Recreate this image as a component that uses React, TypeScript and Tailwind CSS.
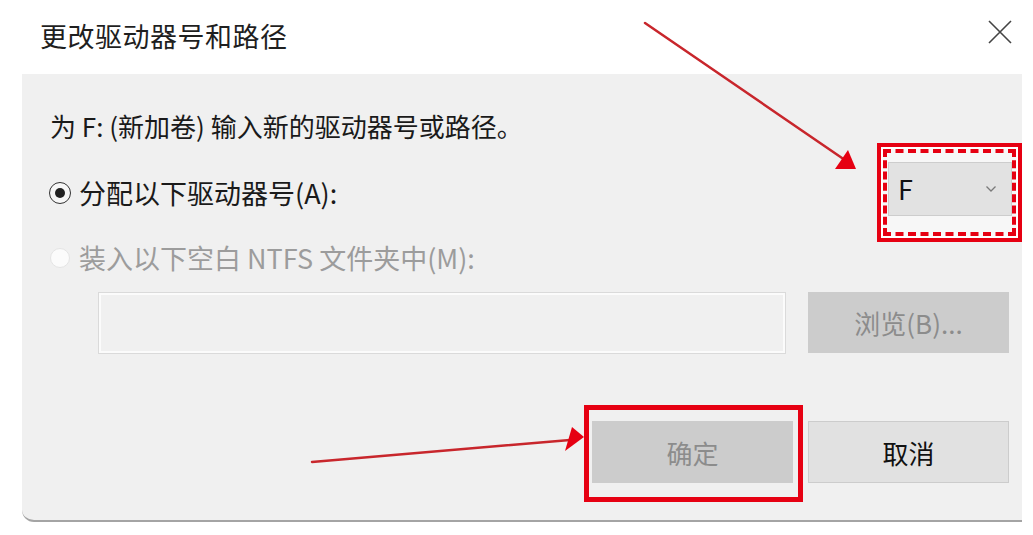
import React from "react";

const font = { fontFamily: '"Noto Sans CJK SC", "Noto Sans", sans-serif' };

// Small chevron used inside the drive letter combo box
const Chevron = () => (
  <svg width="12" height="8" viewBox="0 0 12 8" fill="none">
    <path d="M1.5 1.5 L6 6 L10.5 1.5" stroke="#7a7a7a" strokeWidth="1.3" />
  </svg>
);

// Red annotation arrows drawn over the dialog
const Arrows = () => (
  <svg
    className="absolute inset-0 pointer-events-none"
    width="1033"
    height="535"
    viewBox="0 0 1033 535"
  >
    <line x1="645" y1="23" x2="842" y2="158" stroke="#c8262c" strokeWidth="2.5" strokeLinecap="round" />
    <polygon points="835,169 856,169 848,150" fill="#e60012" />
    <line x1="312" y1="462" x2="570" y2="440" stroke="#c8262c" strokeWidth="2.5" strokeLinecap="round" />
    <polygon points="565,451 584,437 572,427" fill="#e60012" />
  </svg>
);

const App: React.FC = () => {
  return (
    <div className="relative w-[1033px] h-[535px] bg-white overflow-hidden" style={font}>
      {/* Title bar */}
      <div className="h-[74px] flex items-center justify-between pl-[40px] pr-[20px]">
        <span className="text-[27px] leading-[30px] text-[#1f1f1f] -mt-[2px] tracking-[0.5px]">更改驱动器号和路径</span>
        <svg width="26" height="26" viewBox="0 0 26 26" className="-mt-[10px]">
          <path d="M2 2 L24 24 M24 2 L2 24" stroke="#444" strokeWidth="1.6" />
        </svg>
      </div>

      {/* Dialog body */}
      <div className="ml-[22px] w-[1000px] h-[448px] bg-[#f0f0f0] rounded-bl-[12px] border-b-2 border-[#a4a4a4] pt-[37px]">
        <div className="pl-[28px] h-[30px] text-[26px] leading-[30px] text-[#1a1a1a]">
          为 F: (新加卷) 输入新的驱动器号或路径。
        </div>

        {/* Assign drive letter */}
        <div className="mt-[2px] h-[99px] flex items-center justify-between">
          <label className="flex items-center pl-[27px]">
            <span className="w-[22px] h-[22px] rounded-full border-[1.5px] border-[#333] flex items-center justify-center bg-[#f7f7f7]">
              <span className="w-[10px] h-[10px] rounded-full bg-[#222]" />
            </span>
            <span className="ml-[8px] text-[27px] leading-[30px] text-[#1a1a1a]">分配以下驱动器号(A):</span>
          </label>
          <div className="w-[145px] h-[99px] border-[4px] border-[#e60012] bg-white p-[2px]">
            <div className="w-full h-full border-[4px] border-dashed border-[#e60012] bg-[#f7f7f7] pt-[9px] pl-[1px]">
              <div className="w-[124px] h-[54px] bg-[#e2e2e2] border border-[#cdcdcd] flex items-center justify-between pl-[9px] pr-[14px]">
                <span className="text-[27px] leading-[30px] text-[#111]">F</span>
                <Chevron />
              </div>
            </div>
          </div>
        </div>

        {/* Mount in empty NTFS folder (disabled) */}
        <label className="h-[32px] flex items-center pl-[28px]">
          <span className="w-[20px] h-[20px] rounded-full border border-[#e4e4e4] bg-[#fbfbfb]" />
          <span className="ml-[9px] text-[27px] leading-[30px] text-[#9c9c9c]">装入以下空白 NTFS 文件夹中(M):</span>
        </label>

        <div className="mt-[18px] flex items-start pl-[76px] gap-[22px]">
          <div className="w-[688px] h-[62px] border border-[#dadada] shadow-[inset_0_0_0_2px_#fbfbfb] bg-[#f0f0f0]" />
          <button className="w-[201px] h-[61px] bg-[#cccccc] text-[26px] text-[#8c8c8c]">浏览(B)...</button>
        </div>

        {/* Footer buttons */}
        <div className="mt-[51px] flex items-start justify-end pr-[13px]">
          <div className="w-[219px] h-[97px] border-[5px] border-[#e60012] pt-[11px] pl-[3px]">
            <button className="w-[201px] h-[62px] bg-[#cccccc] text-[26px] text-[#8c8c8c]">确定</button>
          </div>
          <button className="ml-[5px] mt-[16px] w-[201px] h-[62px] bg-[#e1e1e1] border border-[#cccccc] text-[26px] text-[#111]">
            取消
          </button>
        </div>
      </div>

      <Arrows />
    </div>
  );
};

export default App;
